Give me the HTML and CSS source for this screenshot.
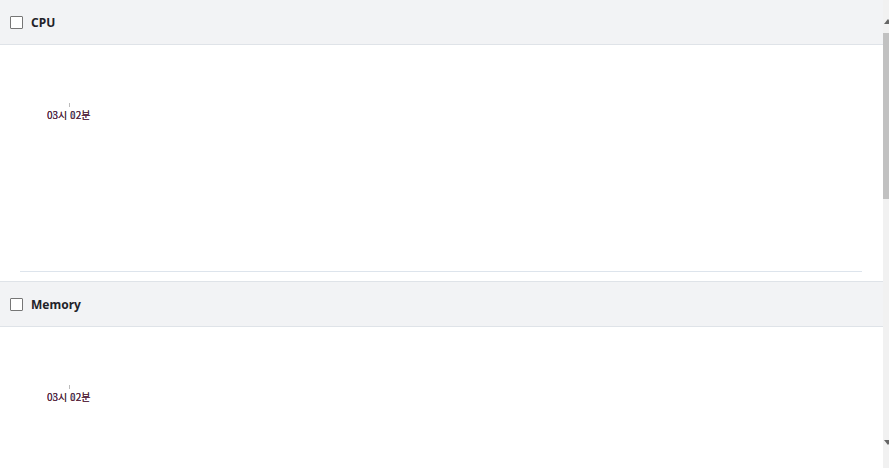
FILE: index.html
```html
<!DOCTYPE html>
<html lang="ko">

<head>
    <meta charset="UTF-8">
    <meta name="viewport" content="width=device-width, initial-scale=1.0">
    <title>모니터링</title>
    <link rel="stylesheet" href="styles.css">
</head>

<body>
    <div class="app">
        <main class="content">
            <section class="panel">
                <div class="panel-head">
                    <span class="check"></span>
                    <span class="panel-title">CPU</span>
                </div>
                <div class="chart">
                    <div class="axis">
                        <span class="tick"></span>
                        <div class="labels">
                            <span class="lbl">03시 02분</span>
                            <span class="lbl c1">08시 82분</span>
                            <span class="lbl c2">03시 12분</span>
                        </div>
                    </div>
                </div>
                <hr class="divider">
            </section>
            <section class="panel">
                <div class="panel-head top-line">
                    <span class="check"></span>
                    <span class="panel-title">Memory</span>
                </div>
                <div class="chart">
                    <div class="axis">
                        <span class="tick"></span>
                        <div class="labels">
                            <span class="lbl">03시 02분</span>
                            <span class="lbl c1">08시 82분</span>
                            <span class="lbl c2">03시 12분</span>
                        </div>
                    </div>
                </div>
            </section>
        </main>
        <div class="scrollbar">
            <span class="arrow up"></span>
            <span class="thumb"></span>
            <span class="grow"></span>
            <span class="arrow down"></span>
        </div>
    </div>
</body>

</html>
```

FILE: styles.css
```css
/* monitoring panels */
html,
body {
    margin: 0;
    padding: 0;
    height: 100%;
    overflow: hidden;
    background: #fff;
    font-family: "Noto Sans", "Noto Sans CJK KR", sans-serif;
    color: #222;
}

.app {
    display: flex;
    height: 100vh;
}

.content {
    flex: 1;
    min-width: 0;
}

.panel-head {
    height: 44px;
    display: flex;
    align-items: center;
    gap: 8px;
    padding: 0 10px;
    background-color: #f2f3f5;
    border-bottom: 1px solid #dfe3e8;
}

.top-line {
    border-top: 1px solid #dfe3e8;
}

.check {
    width: 11px;
    height: 11px;
    border: 1px solid #767676;
    background: #fff;
    border-radius: 1px;
}

.panel-title {
    font-size: 12px;
    font-weight: 700;
    color: #1f2329;
    padding-top: 1px;
}

.chart {
    height: 226px;
    padding-left: 47px;
}

.axis {
    padding-top: 58px;
    width: 46px;
    display: flex;
    flex-direction: column;
}

.tick {
    width: 1px;
    height: 4px;
    margin-left: 22px;
    background: #bbb;
}

.labels {
    display: grid;
    margin-top: 1px;
}

.lbl {
    grid-area: 1 / 1;
    font-family: "Noto Sans CJK KR", sans-serif;
    font-size: 10px;
    line-height: 14px;
    white-space: nowrap;
    color: #222;
}

.c1 {
    color: rgba(30, 40, 140, 0.55);
}

.c2 {
    color: rgba(150, 30, 20, 0.5);
}

.divider {
    margin: 0 21px 9px 20px;
    border: 0;
    border-top: 1px solid #dde4ec;
}

.scrollbar {
    width: 6px;
    background: #f1f1f1;
    display: flex;
    flex-direction: column;
}

.arrow {
    height: 33px;
    position: relative;
}

.arrow.up::after,
.arrow.down::after {
    content: "";
    position: absolute;
    left: 1px;
    border-left: 4px solid transparent;
    border-right: 4px solid transparent;
}

.arrow.up::after {
    top: 19px;
    border-bottom: 5px solid #666;
}

.arrow.down {
    height: 35px;
}

.arrow.down::after {
    top: 7px;
    border-top: 5px solid #666;
}

.thumb {
    height: 166px;
    background: #c1c1c1;
}

.grow {
    flex: 1;
}
```
